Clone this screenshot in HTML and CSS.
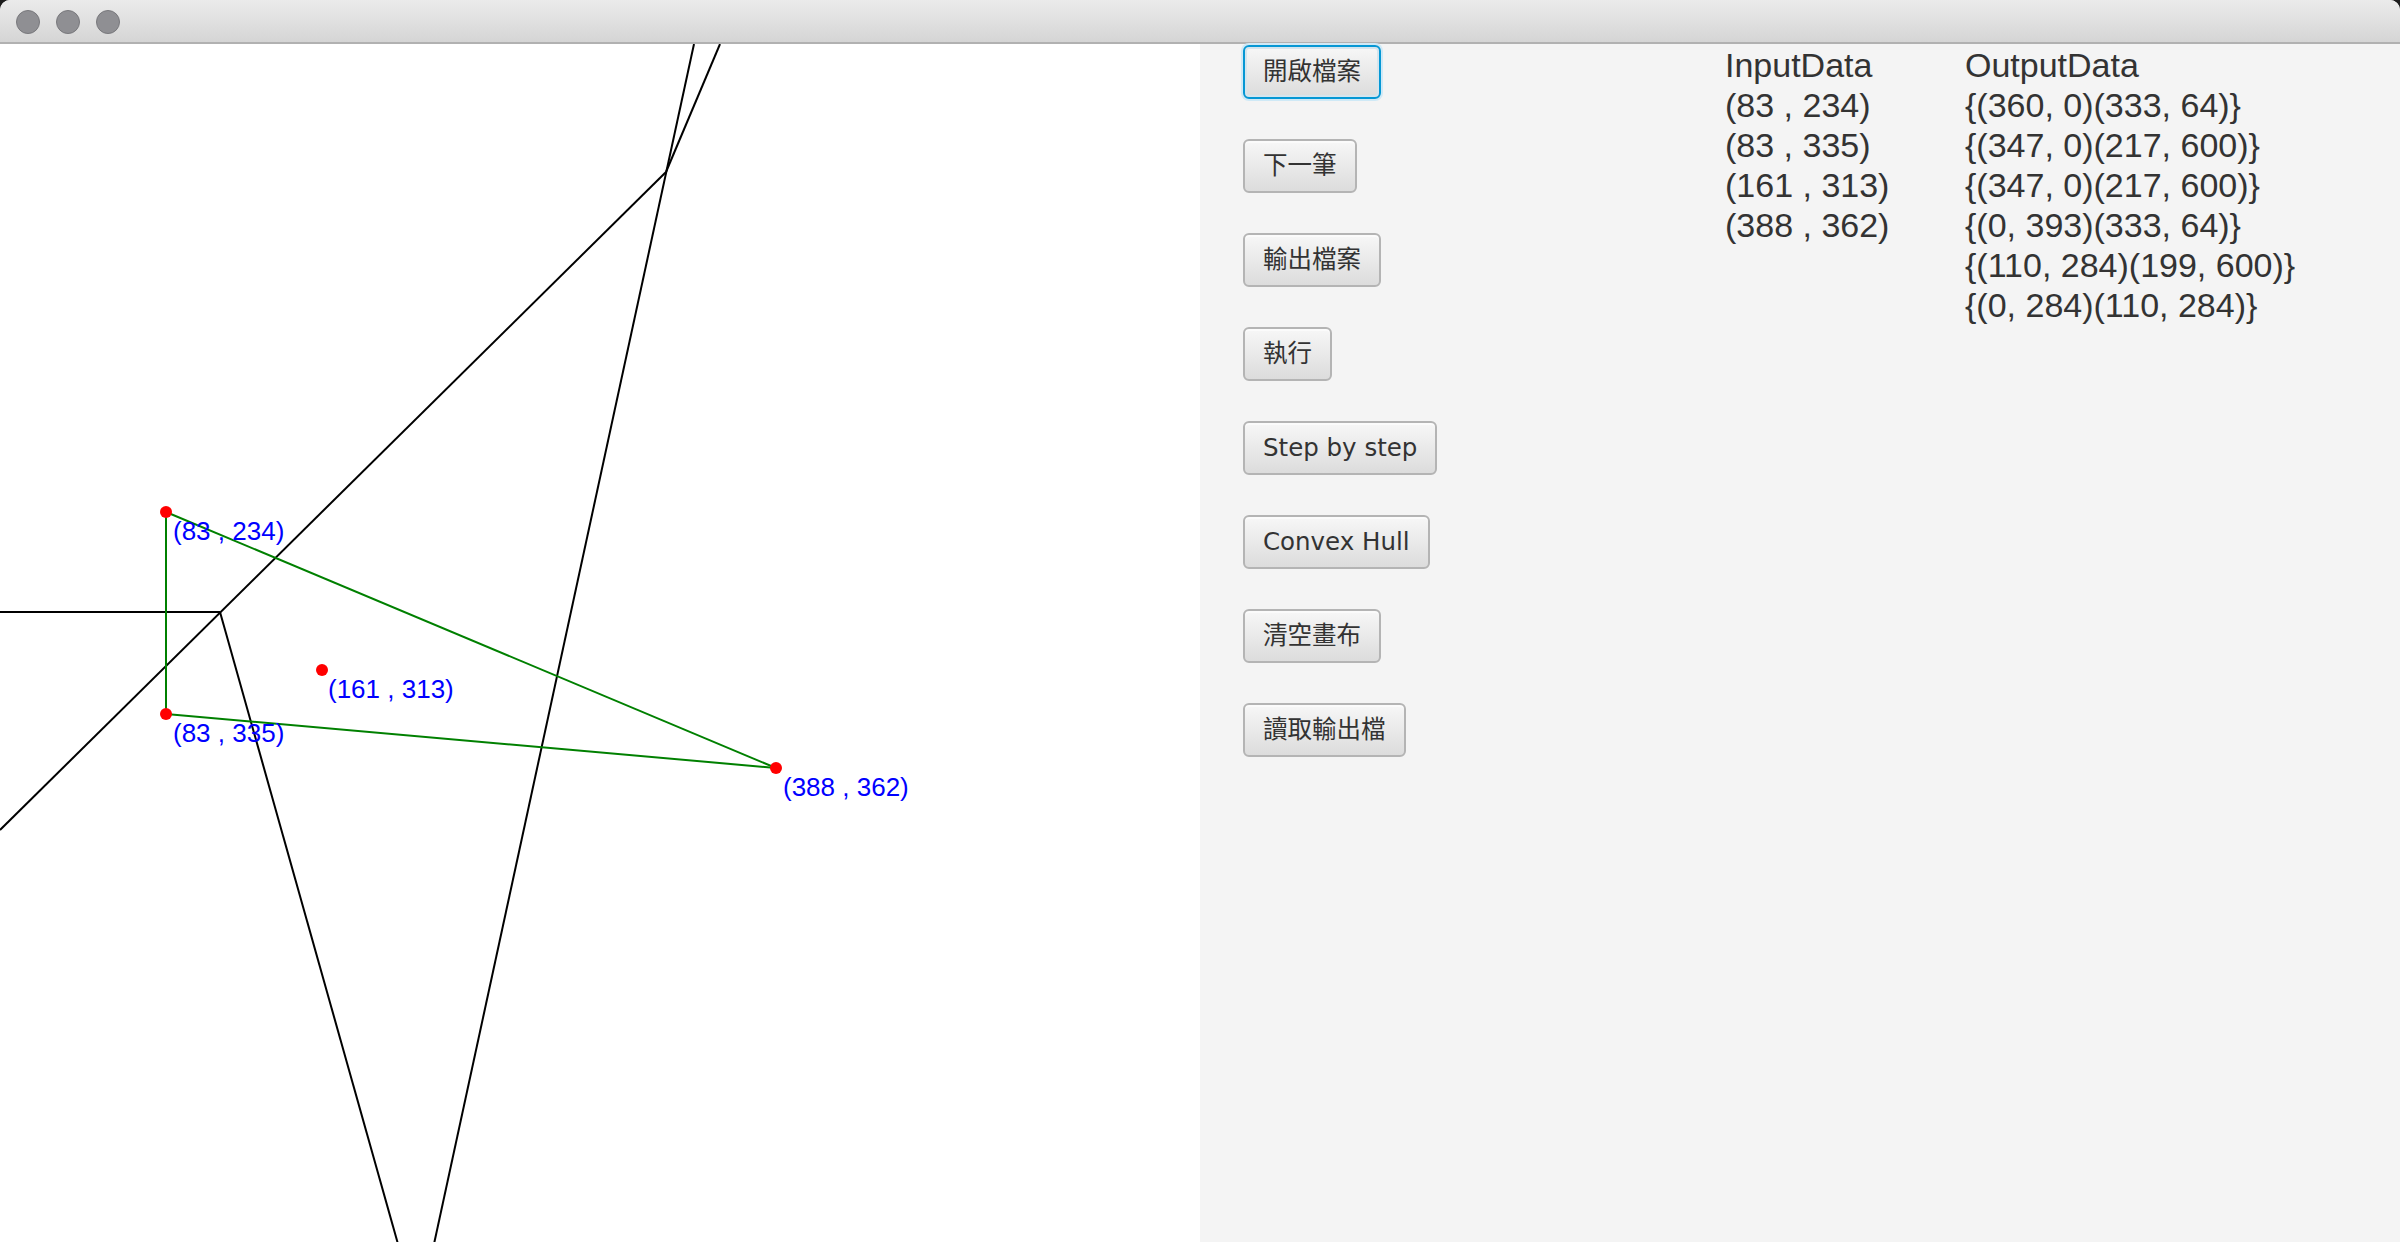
FILE: index.html
```html
<!DOCTYPE html>
<html lang="zh-Hant">
<head>
<meta charset="utf-8">
<title>Voronoi</title>
<link rel="stylesheet" href="styles.css">
</head>
<body>
<div class="window">
  <div class="titlebar">
    <span class="light"></span>
    <span class="light"></span>
    <span class="light"></span>
  </div>
  <div class="main">
    <div class="canvas">
      <svg class="board" width="1200" height="1198" viewBox="0 0 600 599" xmlns="http://www.w3.org/2000/svg">
        <g class="edges">
          <line x1="360" y1="0" x2="333" y2="64"/>
          <line x1="347" y1="0" x2="217" y2="600"/>
          <line x1="0" y1="393" x2="333" y2="64"/>
          <line x1="110" y1="284" x2="199" y2="600"/>
          <line x1="0" y1="284" x2="110" y2="284"/>
        </g>
        <g class="hull">
          <line x1="83" y1="234" x2="83" y2="335"/>
          <line x1="83" y1="335" x2="388" y2="362"/>
          <line x1="388" y1="362" x2="83" y2="234"/>
        </g>
        <g class="dots">
          <circle cx="83" cy="234" r="3"/>
          <circle cx="83" cy="335" r="3"/>
          <circle cx="161" cy="313" r="3"/>
          <circle cx="388" cy="362" r="3"/>
        </g>
        <g class="labels">
          <text x="86.5" y="248">(83 , 234)</text>
          <text x="86.5" y="349">(83 , 335)</text>
          <text x="164" y="327">(161 , 313)</text>
          <text x="391.5" y="376">(388 , 362)</text>
        </g>
      </svg>
    </div>
    <div class="panel">
      <div class="buttons">
        <button class="btn focused">開啟檔案</button>
        <button class="btn">下一筆</button>
        <button class="btn">輸出檔案</button>
        <button class="btn">執行</button>
        <button class="btn">Step by step</button>
        <button class="btn">Convex Hull</button>
        <button class="btn">清空畫布</button>
        <button class="btn">讀取輸出檔</button>
      </div>
      <div class="col">
        <div class="row">InputData</div>
        <div class="row">(83 , 234)</div>
        <div class="row">(83 , 335)</div>
        <div class="row">(161 , 313)</div>
        <div class="row">(388 , 362)</div>
      </div>
      <div class="col">
        <div class="row">OutputData</div>
        <div class="row">{(360, 0)(333, 64)}</div>
        <div class="row">{(347, 0)(217, 600)}</div>
        <div class="row">{(347, 0)(217, 600)}</div>
        <div class="row">{(0, 393)(333, 64)}</div>
        <div class="row">{(110, 284)(199, 600)}</div>
        <div class="row">{(0, 284)(110, 284)}</div>
      </div>
    </div>
  </div>
</div>
</body>
</html>
```

FILE: styles.css
```css
html, body {
  margin: 0;
  padding: 0;
  background: #1c1c1c;
}

.window {
  width: 2400px;
  height: 1242px;
  display: flex;
  flex-direction: column;
  overflow: hidden;
  border-radius: 10px 10px 0 0;
  background: #f4f4f4;
}

.titlebar {
  height: 42px;
  flex: 0 0 42px;
  border-bottom: 2px solid #b1b1b1;
  background: linear-gradient(#ebebeb, #d5d5d5);
  display: flex;
  align-items: center;
  gap: 16px;
  padding-left: 16px;
}

.light {
  width: 22px;
  height: 22px;
  border-radius: 50%;
  background: #8f8f93;
  border: 1px solid #78787c;
  margin-top: 1px;
}

.main {
  flex: 1;
  display: flex;
  min-height: 0;
}

.canvas {
  width: 1200px;
  flex: 0 0 1200px;
  background: #ffffff;
  overflow: hidden;
}

.board {
  display: block;
}

.edges line {
  stroke: #000000;
  stroke-width: 1;
}

.hull line {
  stroke: #008000;
  stroke-width: 1;
}

.dots circle {
  fill: #ff0000;
}

.labels text {
  fill: #0000ff;
  font-family: "Liberation Sans", Arial, sans-serif;
  font-size: 13px;
}

.panel {
  flex: 1;
  display: grid;
  grid-template-columns: 482px 240px auto;
  align-items: start;
  padding-left: 43px;
  padding-top: 1px;
  background: #f4f4f4;
}

.buttons {
  display: flex;
  flex-direction: column;
  align-items: flex-start;
  gap: 40px;
}

.btn {
  height: 54px;
  box-sizing: border-box;
  padding: 0 18px;
  border: 2px solid #b4b4b4;
  border-radius: 6px;
  background: linear-gradient(#f7f7f7, #dcdcdc);
  box-shadow: inset 0 2px 0 #fbfbfb;
  color: #333333;
  font-family: "DejaVu Sans", "Noto Sans CJK TC", sans-serif;
  font-size: 24.5px;
  line-height: 1;
  white-space: nowrap;
}

.btn.focused {
  border-color: #0597d4;
  box-shadow: 0 0 0 2px #cfe9f6, inset 0 0 0 2px #d4e5ee;
}

.col {
  display: flex;
  flex-direction: column;
}

.row {
  height: 40px;
  line-height: 40px;
  font-family: "Liberation Sans", Arial, sans-serif;
  font-size: 34px;
  color: #333333;
  white-space: nowrap;
}
```
